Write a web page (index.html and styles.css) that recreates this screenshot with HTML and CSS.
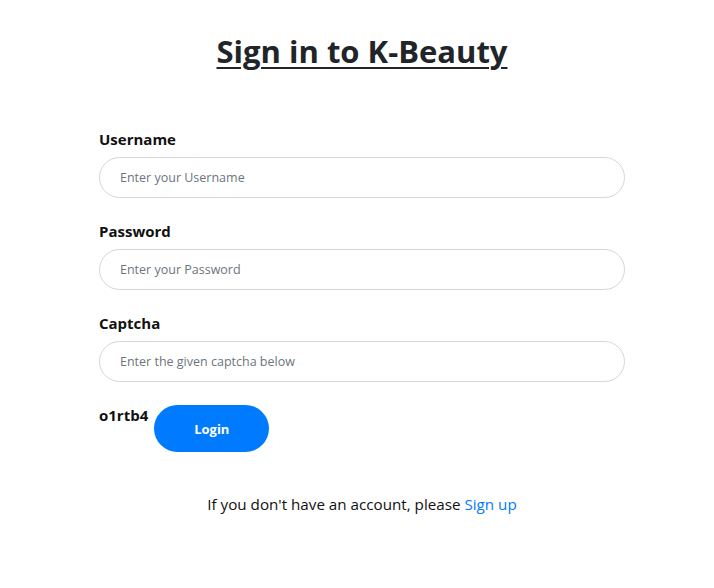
FILE: index.html
```html
<!DOCTYPE html>
<html>
<head>
<meta charset="utf-8">
<link rel="stylesheet" href="styles.css">
</head>
<body>
<div class="page">
  <h1 class="title">Sign in to K-Beauty</h1>
  <form class="form">
    <div class="group">
      <label class="label">Username</label>
      <input class="input" type="text" placeholder="Enter your Username">
    </div>
    <div class="group">
      <label class="label">Password</label>
      <input class="input" type="password" placeholder="Enter your Password">
    </div>
    <div class="group">
      <label class="label">Captcha</label>
      <input class="input" type="text" placeholder="Enter the given captcha below">
    </div>
    <div class="captcha-row">
      <span class="captcha">o1rtb4</span>
      <button class="btn" type="button">Login</button>
    </div>
  </form>
  <p class="signup">If you don't have an account, please <a href="#" class="link">Sign up</a></p>
</div>
</body>
</html>
```
FILE: styles.css
```css
* { box-sizing: border-box; }
body {
  margin: 0;
  font-family: "Open Sans", "Noto Sans", sans-serif;
  color: #212529;
  background: #fff;
}
.page {
  padding: 0 89px 0 99px;
}
.title {
  margin: 0;
  padding-top: 31px;
  text-align: center;
  font-size: 31px;
  font-weight: 700;
  line-height: 40px;
  text-decoration: underline;
  text-decoration-thickness: 2px;
  text-underline-offset: 4px;
}
.form {
  margin-top: 57px;
  display: flex;
  flex-direction: column;
}
.group {
  display: flex;
  flex-direction: column;
  margin-bottom: 22px;
}
.label {
  font-size: 15px;
  font-weight: 700;
  line-height: 22px;
  margin-bottom: 7px;
  color: #111;
}
.input {
  height: 41px;
  border: 1px solid #d4d6da;
  border-radius: 21px;
  padding: 0 20px;
  font-family: inherit;
  font-size: 12.5px;
  color: #495057;
  outline: none;
}
.input::placeholder { color: #6c757d; }
.captcha-row {
  display: flex;
  align-items: flex-start;
  gap: 6px;
  margin-top: 1px;
}
.captcha {
  font-size: 15px;
  font-weight: 700;
  line-height: 20px;
  color: #111;
}
.btn {
  width: 115px;
  height: 47px;
  border: none;
  border-radius: 24px;
  background: #007bff;
  color: #fff;
  font-family: inherit;
  font-size: 13px;
  font-weight: 700;
}
.signup {
  margin: 41px 0 0;
  text-align: center;
  font-size: 15.2px;
  line-height: 22px;
  color: #111;
}
.link { color: #007bff; text-decoration: none; }
```
